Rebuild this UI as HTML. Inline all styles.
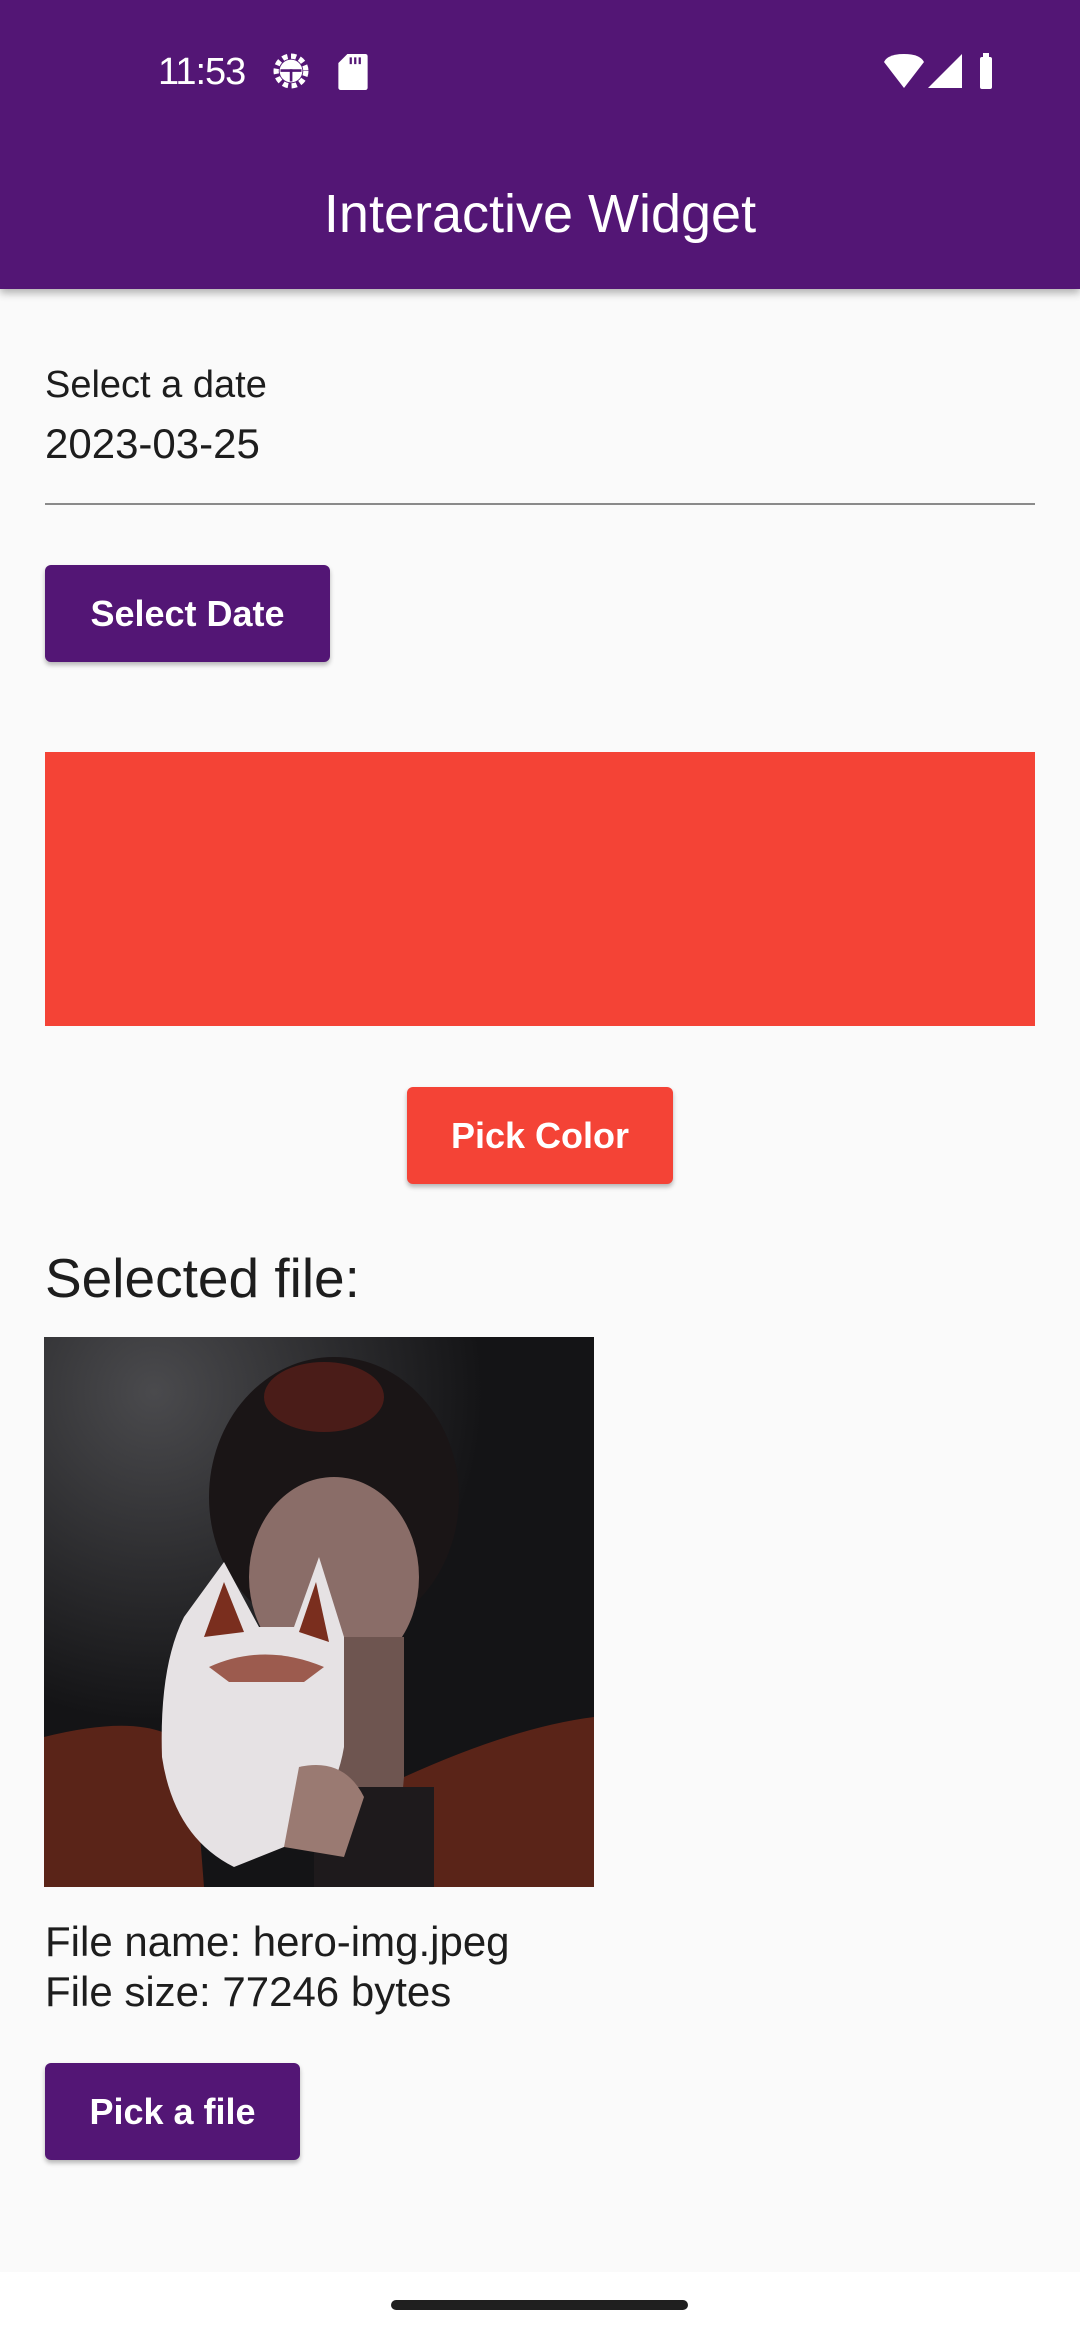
<!DOCTYPE html>
<html><head><meta charset="utf-8"><style>
*{margin:0;padding:0;box-sizing:border-box}
body{width:1080px;height:2340px;background:#fafafa;font-family:"Liberation Sans",Roboto,sans-serif;position:relative;overflow:hidden;color:#1d1d1d}
.abs{position:absolute}
#bar{left:0;top:0;width:1080px;height:289px;background:#531675;box-shadow:0 4px 8px rgba(0,0,0,.3)}
.btn{position:absolute;border-radius:6px;color:#fff;font-size:36px;font-weight:bold;display:flex;align-items:center;justify-content:center;box-shadow:0 3px 5px rgba(0,0,0,.28)}
</style></head><body>
<div id="bar" class="abs">
 <div class="abs" style="left:158px;top:51px;font-size:38px;color:#fff;letter-spacing:-1px">11:53</div>
 <svg class="abs" style="left:270px;top:50px" width="42" height="42" viewBox="0 0 24 24"><circle cx="12" cy="12" r="8.5" fill="none" stroke="#fff" stroke-width="3" stroke-dasharray="3 2"/><circle cx="12" cy="12" r="6.5" fill="#fff"/><rect x="6" y="11" width="12" height="1.5" fill="#531675"/><rect x="11.3" y="11" width="1.5" height="7" fill="#531675"/></svg>
 <svg class="abs" style="left:338px;top:54px" width="30" height="36" viewBox="0 0 13 16"><path d="M4 0H12a1 1 0 0 1 1 1V15a1 1 0 0 1-1 1H1a1 1 0 0 1-1-1V4z" fill="#fff"/><rect x="5" y="1.5" width="1" height="3" fill="#531675"/><rect x="7" y="1.5" width="1" height="3" fill="#531675"/><rect x="9" y="1.5" width="1" height="3" fill="#531675"/></svg>
 <svg class="abs" style="left:884px;top:54px" width="40" height="34" viewBox="0 0 20 17"><path d="M10 17L0 4Q2 0 10 0Q18 0 20 4Z" fill="#fff"/></svg>
 <svg class="abs" style="left:928px;top:54px" width="34" height="34" viewBox="0 0 17 17"><path d="M17 0V17H0Z" fill="#fff"/></svg>
 <div class="abs" style="left:980px;top:57px;width:12px;height:32px;background:#fff;border-radius:2px"></div>
 <div class="abs" style="left:983px;top:53px;width:6px;height:5px;background:#fff"></div>
 <div class="abs" style="left:0;top:184px;width:1080px;text-align:center;font-size:54px;color:#fff;line-height:60px">Interactive Widget</div>
</div>
<div class="abs" style="left:45px;top:364px;font-size:38px">Select a date</div>
<div class="abs" style="left:45px;top:420px;font-size:42px">2023-03-25</div>
<div class="abs" style="left:45px;top:503px;width:990px;height:2px;background:#8a8a8a"></div>
<div class="btn" style="left:45px;top:565px;width:285px;height:97px;background:#531675">Select Date</div>
<div class="abs" style="left:45px;top:752px;width:990px;height:274px;background:#f44336"></div>
<div class="btn" style="left:407px;top:1087px;width:266px;height:97px;background:#f44336">Pick Color</div>
<div class="abs" style="left:45px;top:1246px;font-size:55px">Selected file:</div>
<svg class="abs" style="left:44px;top:1337px" width="550" height="550" viewBox="0 0 550 550">
 <defs><radialGradient id="g" cx="0.2" cy="0.1" r="0.6"><stop offset="0" stop-color="#4a4a4d"/><stop offset="1" stop-color="#141416"/></radialGradient></defs>
 <rect width="550" height="550" fill="url(#g)"/>
 <ellipse cx="290" cy="160" rx="125" ry="140" fill="#1a1516"/>
 <ellipse cx="280" cy="60" rx="60" ry="35" fill="#4a1c18"/>
 <ellipse cx="290" cy="240" rx="85" ry="100" fill="#8a6d68"/>
 <rect x="250" y="300" width="110" height="160" fill="#6e5550"/>
 <path d="M0 400Q120 370 150 420L160 550H0Z" fill="#5a2418"/>
 <path d="M360 440Q470 390 550 380V550H350Z" fill="#5a2418"/>
 <rect x="270" y="450" width="120" height="100" fill="#1e1a1c"/>
 <path d="M140 280L180 225L215 290L250 290L275 220L300 300L300 410Q290 470 240 510L190 530Q130 500 118 420Q115 330 140 280Z" fill="#e6e2e4"/>
 <path d="M160 300L180 245L200 295Z M255 295L272 245L285 305Z" fill="#7a2e1e"/>
 <path d="M165 330Q220 305 280 330L260 345L185 345Z" fill="#8a3a28" opacity=".8"/>
 <path d="M255 430Q300 420 320 460L300 520L240 510Z" fill="#9a7a72"/>
</svg>
<div class="abs" style="left:45px;top:1917px;font-size:42px;line-height:50px">File name: hero-img.jpeg<br>File size: 77246 bytes</div>
<div class="btn" style="left:45px;top:2063px;width:255px;height:97px;background:#531675">Pick a file</div>
<div class="abs" style="left:0;top:2272px;width:1080px;height:68px;background:#fff"></div>
<div class="abs" style="left:391px;top:2300px;width:297px;height:10px;border-radius:5px;background:#1f1f1f"></div>
</body></html>
